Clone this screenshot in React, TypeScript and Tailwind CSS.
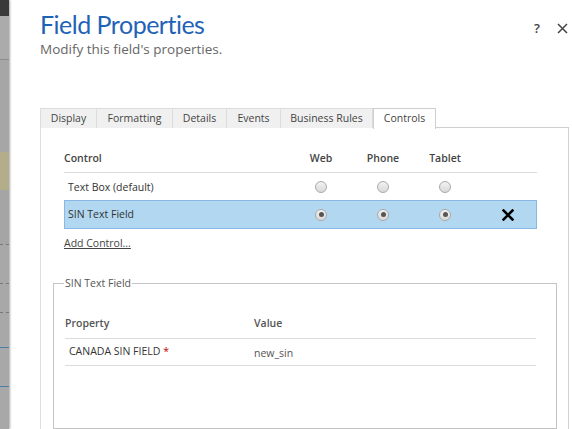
import React from "react";

const font = { fontFamily: '"Open Sans", "Noto Sans", sans-serif' };

function Radio({ checked }: { checked?: boolean }) {
  return (
    <span className="inline-flex h-[12px] w-[12px] items-center justify-center rounded-full border border-[#a9a9a9] bg-gradient-to-b from-[#f2f2f2] to-[#d9d9d9]">
      {checked && <span className="h-[5px] w-[5px] rounded-full bg-[#555]" />}
    </span>
  );
}

function Tab({ label, w, active }: { label: string; w: string; active?: boolean }) {
  if (active) {
    return (
      <div className={`relative -mb-px flex h-[21px] items-center justify-center border border-b-0 border-[#cfcfcf] bg-white text-[10.5px] text-[#444] ${w}`}>
        {label}
      </div>
    );
  }
  return (
    <div className={`flex h-[20px] items-center justify-center border border-l-0 border-b-0 border-[#dcdcdc] bg-[#f0f0f0] text-[10.5px] text-[#444] first:border-l ${w}`}>
      {label}
    </div>
  );
}

export default function App() {
  return (
    <div className="flex h-[429px] w-[572px] overflow-hidden bg-white" style={font}>
      {/* background app strip */}
      <div className="flex w-[9px] shrink-0 flex-col bg-[#a9a9a9] shadow-[1px_0_2px_rgba(0,0,0,0.35)]">
        <div className="h-[16px] bg-[#3a3a3a]" />
        <div className="h-[44px] border-b border-[#8c8c8c] bg-[#ababab]" />
        <div className="h-[92px] bg-[#a6a6a6]" />
        <div className="h-[38px] bg-[#b3ad8a]" />
        <div className="h-[54px] bg-[#a5a5a5]" />
        <div className="h-[39px] border-t border-dashed border-[#777] bg-[#a8a8a8]" />
        <div className="h-[29px] border-t border-dashed border-[#777] bg-[#a8a8a8]" />
        <div className="h-[35px] border-t border-dashed border-[#777] bg-[#a8a8a8]" />
        <div className="h-[39px] border-t border-[#4a7fa3] bg-[#a8a8a8]" />
        <div className="flex-1 border-t border-[#4a7fa3] bg-[#a8a8a8]" />
      </div>

      {/* dialog */}
      <div className="flex flex-1 flex-col pl-[31px] pr-[3px]">
        <div className="flex items-start justify-between pt-[7px]">
          <div>
            <div className="text-[25px] leading-[34px] tracking-[-0.5px] text-[#1f63b6]" style={{ fontFamily: 'Lato, "Open Sans", sans-serif', fontWeight: 400 }}>
              Field Properties
            </div>
            <div className="mt-[-1px] text-[13.5px] leading-[18px] text-[#666]">
              Modify this field's properties.
            </div>
          </div>
          <div className="mt-[15px] flex items-center gap-[17px] pr-[1px] text-[#444]">
            <span className="text-[13px] font-semibold leading-none">?</span>
            <svg width="11" height="11" viewBox="0 0 11 11" stroke="#444" strokeWidth="1.5">
              <path d="M1 1 L10 10 M10 1 L1 10" />
            </svg>
          </div>
        </div>

        {/* tabs */}
        <div className="mt-[50px] flex items-end">
          <Tab label="Display" w="w-[57px]" />
          <Tab label="Formatting" w="w-[76px]" />
          <Tab label="Details" w="w-[54px]" />
          <Tab label="Events" w="w-[54px]" />
          <Tab label="Business Rules" w="w-[92px]" />
          <Tab label="Controls" w="w-[63px]" active />
          <div className="flex-1 self-end border-b border-[#cfcfcf]" />
        </div>

        {/* panel */}
        <div className="flex flex-1 flex-col border-l border-r border-l-[#dedede] border-r-[#d0d0d0] pl-[23px] pr-[31px]">
          <div className="mt-[18px] text-[10.5px] text-[#333]">
            <div className="grid h-[27px] grid-cols-[226px_62px_62px_62px_1fr] items-center border-b border-[#dcdcdc] font-semibold text-[#444]">
              <div>Control</div>
              <div className="text-center">Web</div>
              <div className="text-center">Phone</div>
              <div className="text-center">Tablet</div>
              <div />
            </div>
            <div className="grid h-[27px] grid-cols-[226px_62px_62px_62px_1fr] items-center">
              <div className="pl-[4px] pt-[2px]">Text Box (default)</div>
              <div className="flex justify-center"><Radio /></div>
              <div className="flex justify-center"><Radio /></div>
              <div className="flex justify-center"><Radio /></div>
              <div />
            </div>
            <div className="grid h-[29px] grid-cols-[225px_62px_62px_62px_1fr] items-center border border-[#8ab8e6] bg-[#b2d7f0]">
              <div className="pl-[3px]">SIN Text Field</div>
              <div className="flex justify-center"><Radio checked /></div>
              <div className="flex justify-center"><Radio checked /></div>
              <div className="flex justify-center"><Radio checked /></div>
              <div className="flex justify-center pl-[3px]">
                <svg width="12" height="12" viewBox="0 0 12 12" stroke="#000" strokeWidth="2.6" strokeLinecap="square">
                  <path d="M1.5 1.5 L10.5 10.5 M10.5 1.5 L1.5 10.5" />
                </svg>
              </div>
            </div>
          </div>
          <div className="mt-[7px] text-[10.5px] text-[#444] underline">Add Control...</div>

          {/* fieldset */}
          <fieldset className="mt-[24px] ml-[-11px] mr-[-20px] flex-1 border border-[#c4c4c4] pl-[11px] pr-[20px]">
            <legend className="ml-[-1px] px-[1px] text-[10.5px] text-[#555]">SIN Text Field</legend>
            <div className="mt-[19px] text-[10.5px]">
              <div className="grid h-[28px] grid-cols-[189px_1fr] items-center border-b border-[#dcdcdc] font-semibold text-[#555]">
                <div>Property</div>
                <div>Value</div>
              </div>
              <div className="grid h-[27px] grid-cols-[189px_1fr] items-center border-b border-[#dcdcdc] text-[#333]">
                <div className="pl-[4px]">
                  CANADA SIN FIELD <span className="text-[#c00000]">*</span>
                </div>
                <div className="pt-[4px] text-[#555]">new_sin</div>
              </div>
            </div>
          </fieldset>
        </div>
      </div>
    </div>
  );
}
